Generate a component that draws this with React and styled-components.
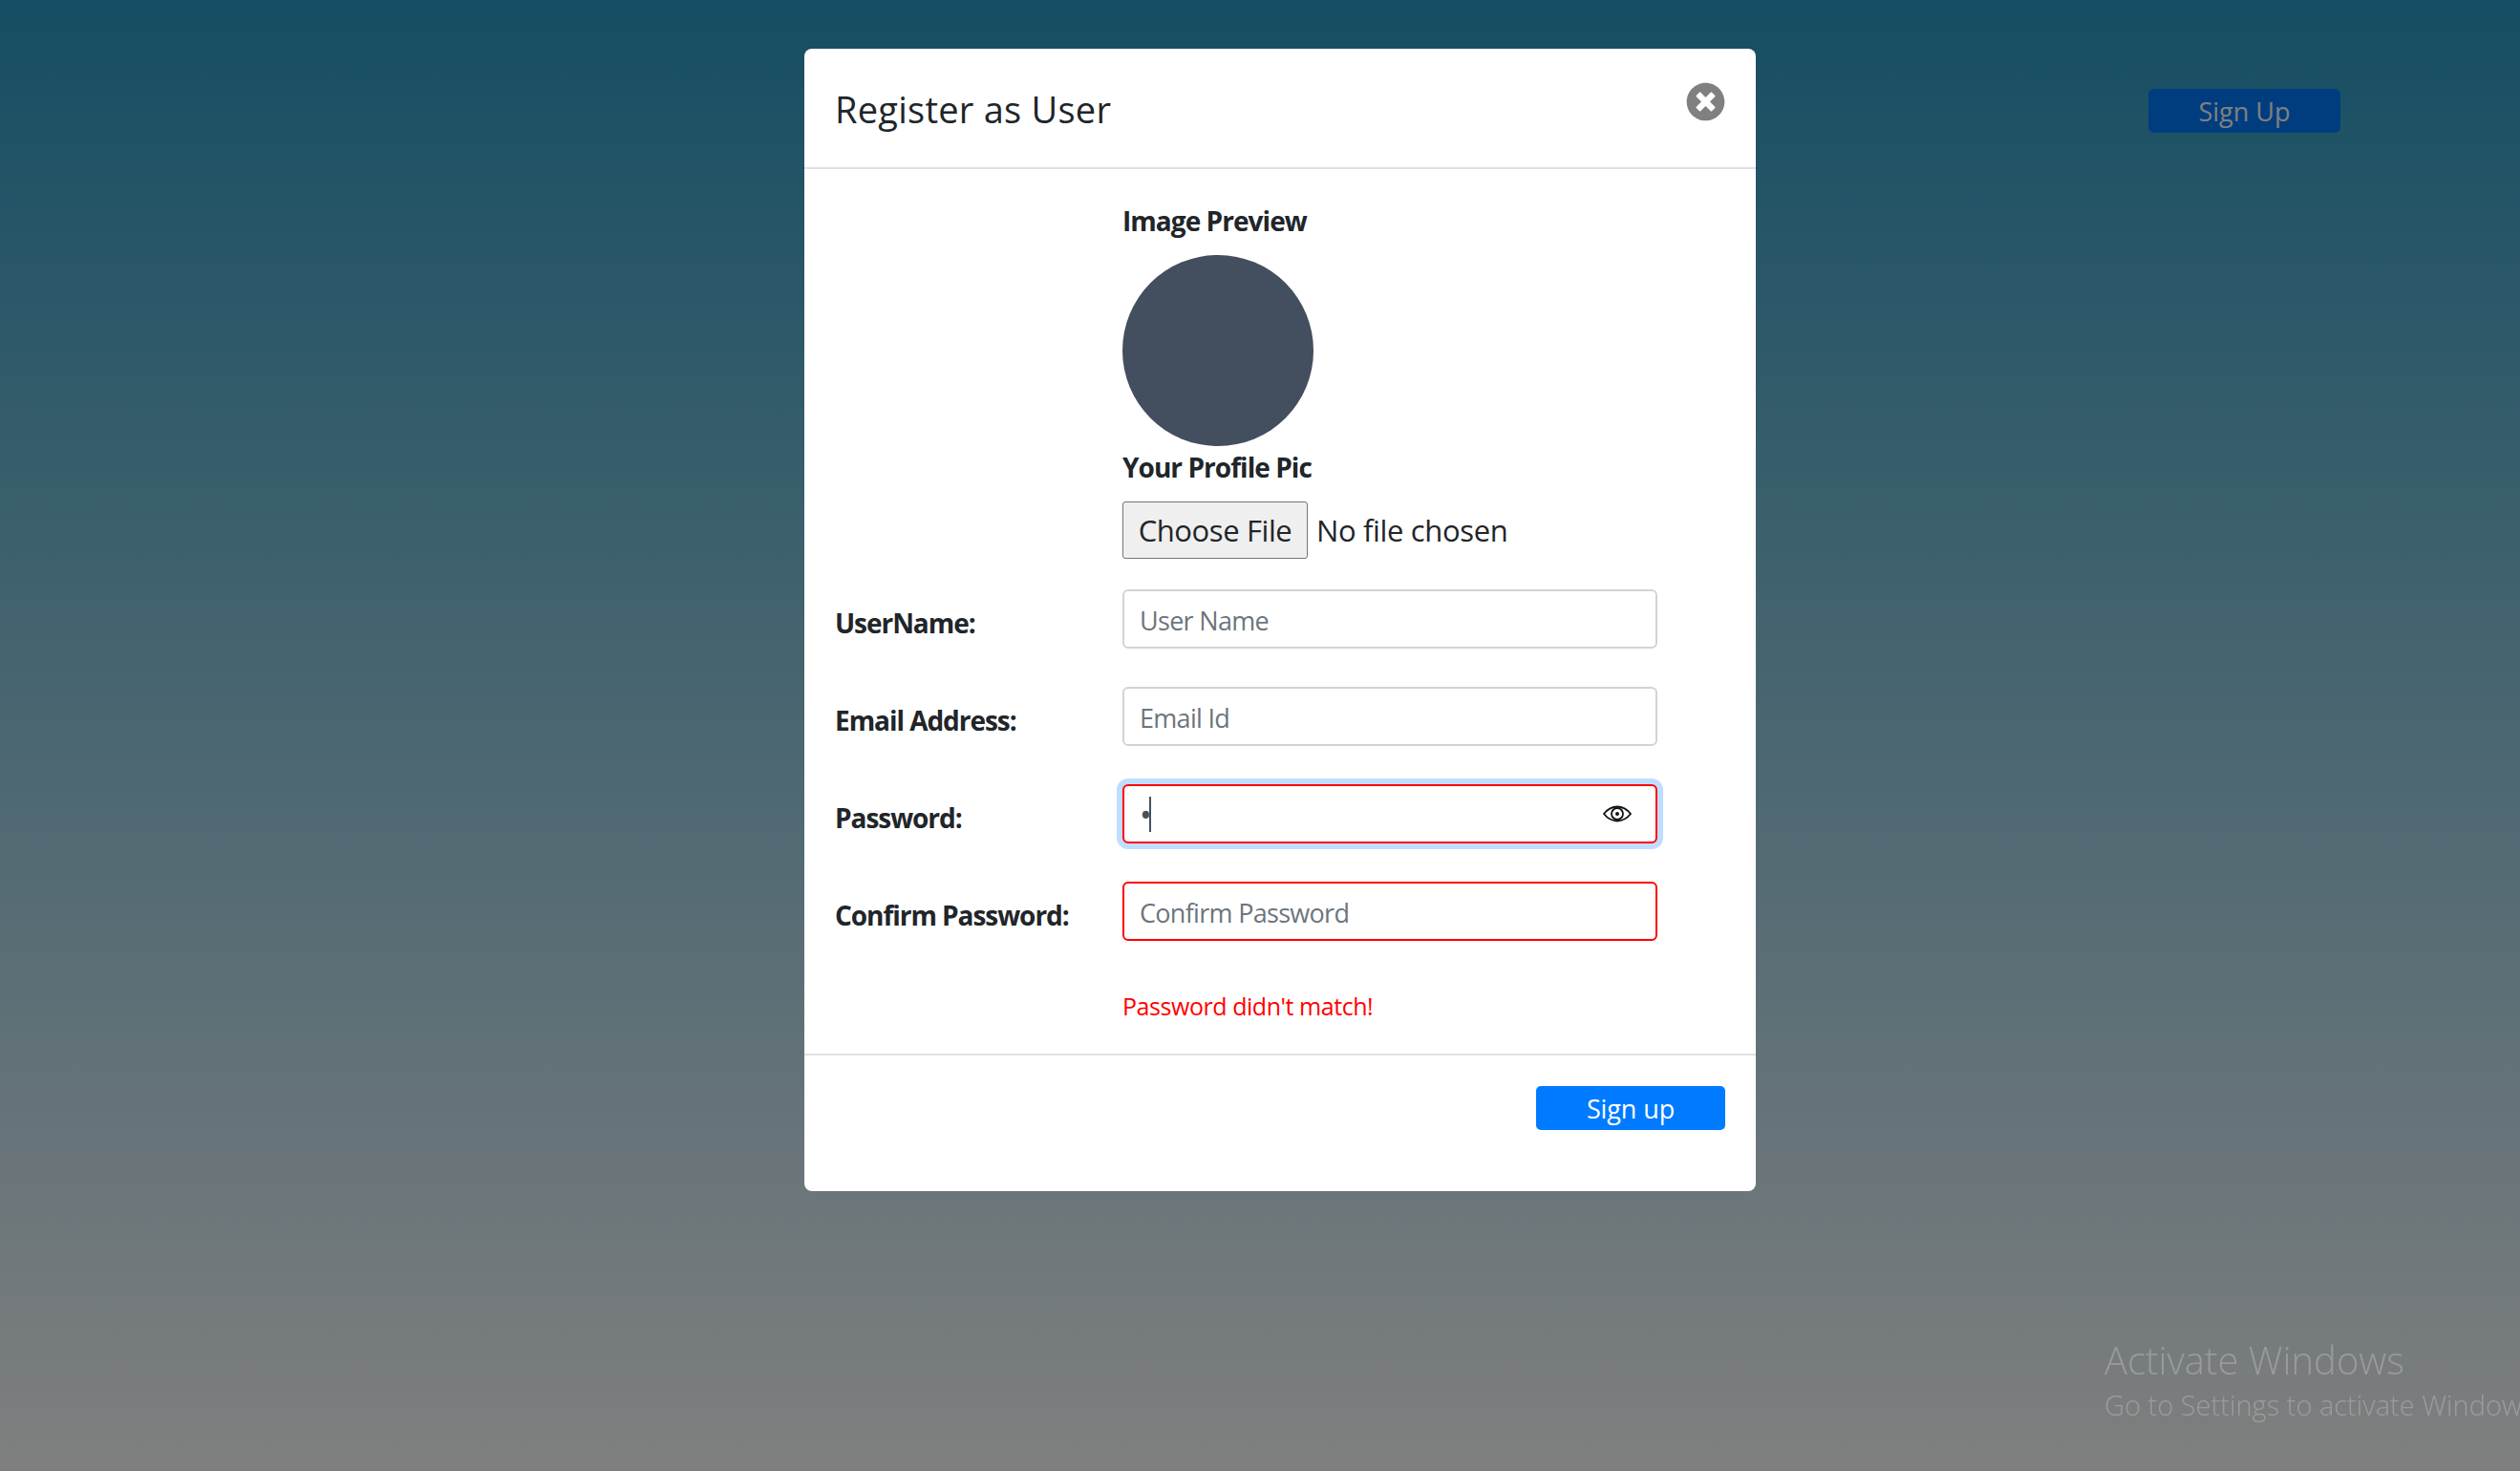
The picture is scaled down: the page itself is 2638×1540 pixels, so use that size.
import React from "react";
import styled, { createGlobalStyle } from "styled-components";
import { FaTimesCircle } from "react-icons/fa";

const GlobalStyle = createGlobalStyle`
    * {
        box-sizing: border-box;
    }
    html, body {
        margin: 0;
        padding: 0;
        overflow: hidden;
        font-family: "Open Sans", "Noto Sans", sans-serif;
        color: #212529;
    }
`;

export default function App() {
    return (
        <>
            <GlobalStyle />
            <Page>
                <TopButton>Sign Up</TopButton>
            </Page>
            <Backdrop />
            <ModalLayer>
                <Modal>
                    <Header>
                        <Title>Register as User</Title>
                        <CloseButton aria-label="Close">
                            <FaTimesCircle size={41} />
                        </CloseButton>
                    </Header>
                    <Body>
                        <Preview>
                            <FieldLabel>Image Preview</FieldLabel>
                            <Avatar />
                            <FieldLabel>Your Profile Pic</FieldLabel>
                            <FileInput type="file" />
                        </Preview>
                        <Row>
                            <RowLabel>UserName:</RowLabel>
                            <TextInput placeholder="User Name" />
                        </Row>
                        <Row>
                            <RowLabel>Email Address:</RowLabel>
                            <TextInput placeholder="Email Id" />
                        </Row>
                        <Row>
                            <RowLabel>Password:</RowLabel>
                            <PasswordBox>
                                <TextInput type="password" defaultValue="a" $invalid $focused />
                                <Caret />
                                <EyeButton aria-label="Show password">
                                    <svg width="30" height="18" viewBox="0 0 30 18" fill="none" stroke="#111" strokeWidth="1.8">
                                        <path d="M1 9C5 4 9.500 1.500 15 1.500S25 4 29 9C25 14 20.500 16.500 15 16.500S5 14 1 9Z" />
                                        <circle cx="15" cy="9" r="6" />
                                        <circle cx="15" cy="9" r="2" fill="#111" stroke="none" />
                                    </svg>
                                </EyeButton>
                            </PasswordBox>
                        </Row>
                        <Row>
                            <RowLabel>Confirm Password:</RowLabel>
                            <TextInput placeholder="Confirm Password" $invalid />
                        </Row>
                        <ErrorText>Password didn't match!</ErrorText>
                    </Body>
                    <Footer>
                        <SubmitButton>Sign up</SubmitButton>
                    </Footer>
                </Modal>
            </ModalLayer>
            <Watermark>
                <WatermarkTitle>Activate Windows</WatermarkTitle>
                <WatermarkText>Go to Settings to activate Windows.</WatermarkText>
            </Watermark>
        </>
    );
}

const Page = styled.div`
    height: 100vh;
    padding: 93px 188px 0 0;
    display: flex;
    justify-content: flex-end;
    align-items: flex-start;
    background: linear-gradient(to bottom, #2c9cc6, #ffffff);
`;
const TopButton = styled.button`
    width: 201px;
    height: 46px;
    border: none;
    border-radius: 6px;
    background: #007bff;
    color: #fff;
    font-family: inherit;
    font-size: 27px;
`;
const Backdrop = styled.div`
    position: fixed;
    inset: 0;
    background: rgba(0, 0, 0, 0.5);
`;
const ModalLayer = styled.div`
    position: fixed;
    inset: 0;
    padding: 51px 0 0 842px;
`;
const Modal = styled.div`
    width: 996px;
    background: #fff;
    border-radius: 8px;
`;
const Header = styled.div`
    height: 126px;
    padding: 0 33px 0 32px;
    display: flex;
    justify-content: space-between;
    align-items: flex-start;
    border-bottom: 2px solid #dee2e6;
`;
const Title = styled.h5`
    margin: 40px 0 0;
    font-size: 38px;
    line-height: 46px;
    font-weight: 500;
    letter-spacing: 0.25px;
`;
const CloseButton = styled.button`
    margin: 35px -1px 0 0;
    padding: 0;
    border: none;
    background: none;
    color: #808080;
    line-height: 0;
`;
const Body = styled.div`
    padding: 32px 33px 0 32px;
`;
const Preview = styled.div`
    margin: 0 0 32px 301px;
`;
const FieldLabel = styled.div`
    font-size: 28px;
    line-height: 44px;
    font-weight: 700;
    letter-spacing: -0.95px;
    & + div {
        margin-top: 14px;
    }
`;
const Avatar = styled.div`
    width: 200px;
    height: 200px;
    border-radius: 50%;
    background: #434e5f;
`;
const FileInput = styled.input`
    display: block;
    margin-top: 14px;
    font-family: inherit;
    font-size: 31px;
    letter-spacing: -0.35px;
    color: #212529;
    &::file-selector-button {
        width: 194px;
        height: 60px;
        margin-right: 9px;
        padding: 0;
        border: 1.67px solid #767676;
        border-radius: 3px;
        background: #efefef;
        color: #212529;
        font-family: inherit;
        font-size: 31px;
        letter-spacing: -0.4px;
    }
`;
const Row = styled.div`
    display: grid;
    grid-template-columns: 301px 560px;
    align-items: center;
    margin-bottom: 40px;
`;
const RowLabel = styled.label`
    padding-top: 8px;
    font-size: 28px;
    line-height: 44px;
    font-weight: 700;
    letter-spacing: -1.05px;
`;
const PasswordBox = styled.div`
    position: relative;
`;
const TextInput = styled.input`
    display: block;
    width: 560px;
    height: 62px;
    padding: 2px 16px 0;
    border: 2px solid ${(props) => (props.$invalid ? "#ff0000" : "#ced4da")};
    border-radius: 6px;
    outline: none;
    background: #fff;
    color: #495057;
    font-family: inherit;
    font-size: ${(props) => (props.$focused ? "34px" : "27px")};
    letter-spacing: -0.7px;
    box-shadow: ${(props) => (props.$focused ? "0 0 0 6px #bfdeff" : "none")};
    &::placeholder {
        color: #6c757d;
        opacity: 1;
    }
`;
const Caret = styled.span`
    position: absolute;
    left: 28px;
    top: 13px;
    width: 2px;
    height: 37px;
    background: #495057;
`;
const EyeButton = styled.span`
    position: absolute;
    right: 27px;
    top: 22px;
    line-height: 0;
`;
const ErrorText = styled.div`
    margin: 48px 0 0 301px;
    color: #ff0000;
    font-size: 25px;
    line-height: 40px;
    letter-spacing: -0.45px;
`;
const Footer = styled.div`
    height: 144px;
    margin-top: 30px;
    padding: 32px 32px 0 0;
    display: flex;
    justify-content: flex-end;
    align-items: flex-start;
    border-top: 2px solid #dee2e6;
`;
const SubmitButton = styled.button`
    width: 198px;
    height: 46px;
    border: none;
    border-radius: 5px;
    background: #007bff;
    color: #fff;
    font-family: inherit;
    font-size: 27px;
    letter-spacing: -0.1px;
`;
const Watermark = styled.div`
    position: fixed;
    left: 2203px;
    top: 1398px;
    white-space: nowrap;
    color: rgba(255, 255, 255, 0.24);
`;
const WatermarkTitle = styled.div`
    font-size: 40px;
    line-height: 52px;
    font-weight: 300;
`;
const WatermarkText = styled.div`
    margin-top: 2px;
    font-size: 29px;
    line-height: 38px;
    font-weight: 300;
`;
